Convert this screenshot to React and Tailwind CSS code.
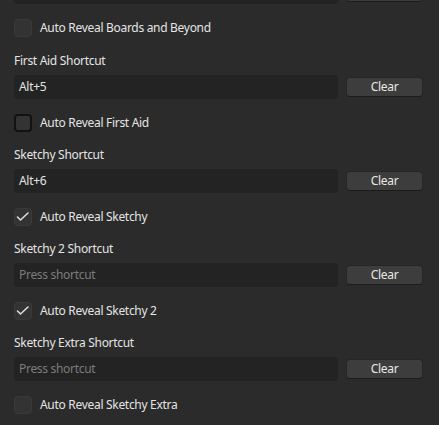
import React from "react";

const font = { fontFamily: '"Noto Sans", "Open Sans", sans-serif', letterSpacing: "-0.3px" };

function Check({ checked, focused, label }) {
  return (
    <div className="flex items-center h-[18px]">
      <div
        className={
          "w-[18px] h-[18px] rounded-[4px] bg-[#333333] flex items-center justify-center box-border shrink-0 " +
          (focused ? "border-2 border-[#121212]" : "border border-[#3a3a3a]")
        }
      >
        {checked && (
          <svg width="16" height="16" viewBox="1 1 16 16" className="shrink-0">
            <polyline
              points="3.5,9 6.5,12 14,5"
              fill="none"
              stroke="#dcdcdc"
              strokeWidth="1.6"
              strokeLinecap="round"
              strokeLinejoin="round"
            />
          </svg>
        )}
      </div>
      <span className="ml-2 text-[12px] text-[#e4e4e4] leading-4">{label}</span>
    </div>
  );
}

function InputRow({ value, blank }) {
  return (
    <div className="flex items-center gap-2 h-6">
      <div className="flex-1 h-6 rounded-[4px] bg-[#232323] flex items-center pl-[5px] text-[12px] leading-4">
        {blank ? null : value ? (
          <span className="text-[#e4e4e4]">{value}</span>
        ) : (
          <span className="text-[#7c7c7c]">Press shortcut</span>
        )}
      </div>
      <div className="w-[77px] h-5 rounded-[4px] bg-[#3d3d3d] border border-[#262626] border-b-[#1b1b1b] text-[12px] text-[#e8e8e8] leading-4 flex items-center justify-center">
        {blank ? null : "Clear"}
      </div>
    </div>
  );
}

function Section({ title, value, checked, focused, check }) {
  return (
    <div className="flex flex-col">
      <div className="h-4 text-[12px] leading-4 text-[#e4e4e4]">{title}</div>
      <div className="mt-[6px]">
        <InputRow value={value} />
      </div>
      <div className="mt-[15px] pb-[15px]">
        <Check checked={checked} focused={focused} label={check} />
      </div>
    </div>
  );
}

export default function App() {
  return (
    <div
      className="w-[439px] h-[425px] overflow-hidden bg-[#2b2b2b] pl-[14px] pr-[16px]"
      style={font}
    >
      <div className="mt-[-20px]">
        <InputRow blank />
      </div>
      <div className="mt-[15px] pb-[16px]">
        <Check label="Auto Reveal Boards and Beyond" />
      </div>
      <Section title="First Aid Shortcut" value="Alt+5" focused check="Auto Reveal First Aid" />
      <Section title="Sketchy Shortcut" value="Alt+6" checked check="Auto Reveal Sketchy" />
      <Section title="Sketchy 2 Shortcut" checked check="Auto Reveal Sketchy 2" />
      <Section title="Sketchy Extra Shortcut" check="Auto Reveal Sketchy Extra" />
    </div>
  );
}
